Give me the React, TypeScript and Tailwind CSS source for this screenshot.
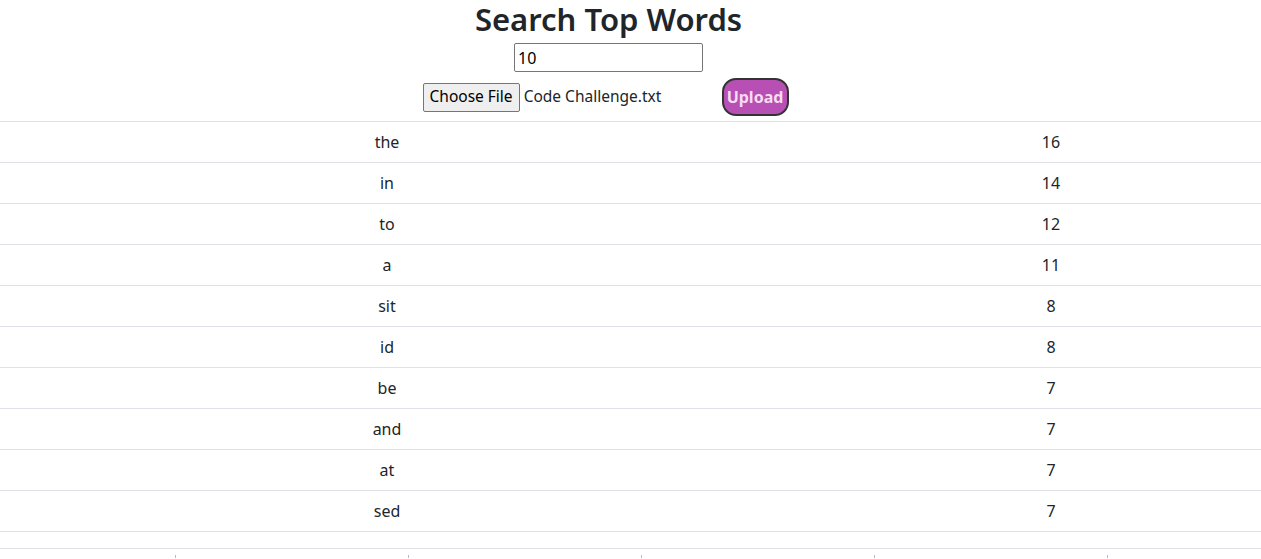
const rows: [string, number][] = [
  ['the', 16],
  ['in', 14],
  ['to', 12],
  ['a', 11],
  ['sit', 8],
  ['id', 8],
  ['be', 7],
  ['and', 7],
  ['at', 7],
  ['sed', 7],
]

export default function App() {
  return (
    <div className="w-[1261px] h-[559px] overflow-hidden bg-white text-[#212529] font-['Noto_Sans','Open_Sans',sans-serif]">
      <div className="w-[1217px]">
        <h2 className="text-center text-[31px] font-semibold leading-[34px] pt-[2px] mb-[7px]">Search Top Words</h2>

        <div className="flex justify-center">
          <input
            defaultValue="10"
            className="w-[189px] h-[29px] border border-[#767676] rounded-[2px] px-[3px] text-[16px] text-black outline-none"
          />
        </div>

        <div className="flex justify-center items-center mt-[6px] pr-[6px]">
          <div className="w-[299px] flex items-center gap-[4px]">
            <button className="h-[29px] px-[6px] bg-[#efefef] border border-[#767676] rounded-[2px] text-black text-[15.5px]">
              Choose File
            </button>
            <span className="text-[15.5px]">Code Challenge.txt</span>
          </div>
          <button className="w-[67px] h-[38px] rounded-[14px] border-2 border-[#333] bg-[#b84fb5] text-[#f6dcef] font-bold text-[16px]">
            Upload
          </button>
        </div>
      </div>

      <div className="mt-[5px] w-full overflow-hidden">
        {rows.map(([word, count]) => (
          <div key={word} className="flex h-[41px] items-center border-t border-[#dee2e6] text-[16px]">
            <div className="w-[774px] shrink-0 text-center">{word}</div>
            <div className="w-[554px] shrink-0 text-center">{count}</div>
          </div>
        ))}
        <div className="border-t border-[#dee2e6] h-[17px]" />
        <div className="flex border-t border-[#dee2e6] h-[10px]">
          <div className="w-[175px] shrink-0" />
          {[0, 1, 2, 3, 4].map((i) => (
            <div key={i} className="w-[233px] shrink-0 flex items-end">
              <div className="w-px h-[3px] bg-[#bbb]" />
            </div>
          ))}
        </div>
      </div>
    </div>
  )
}
